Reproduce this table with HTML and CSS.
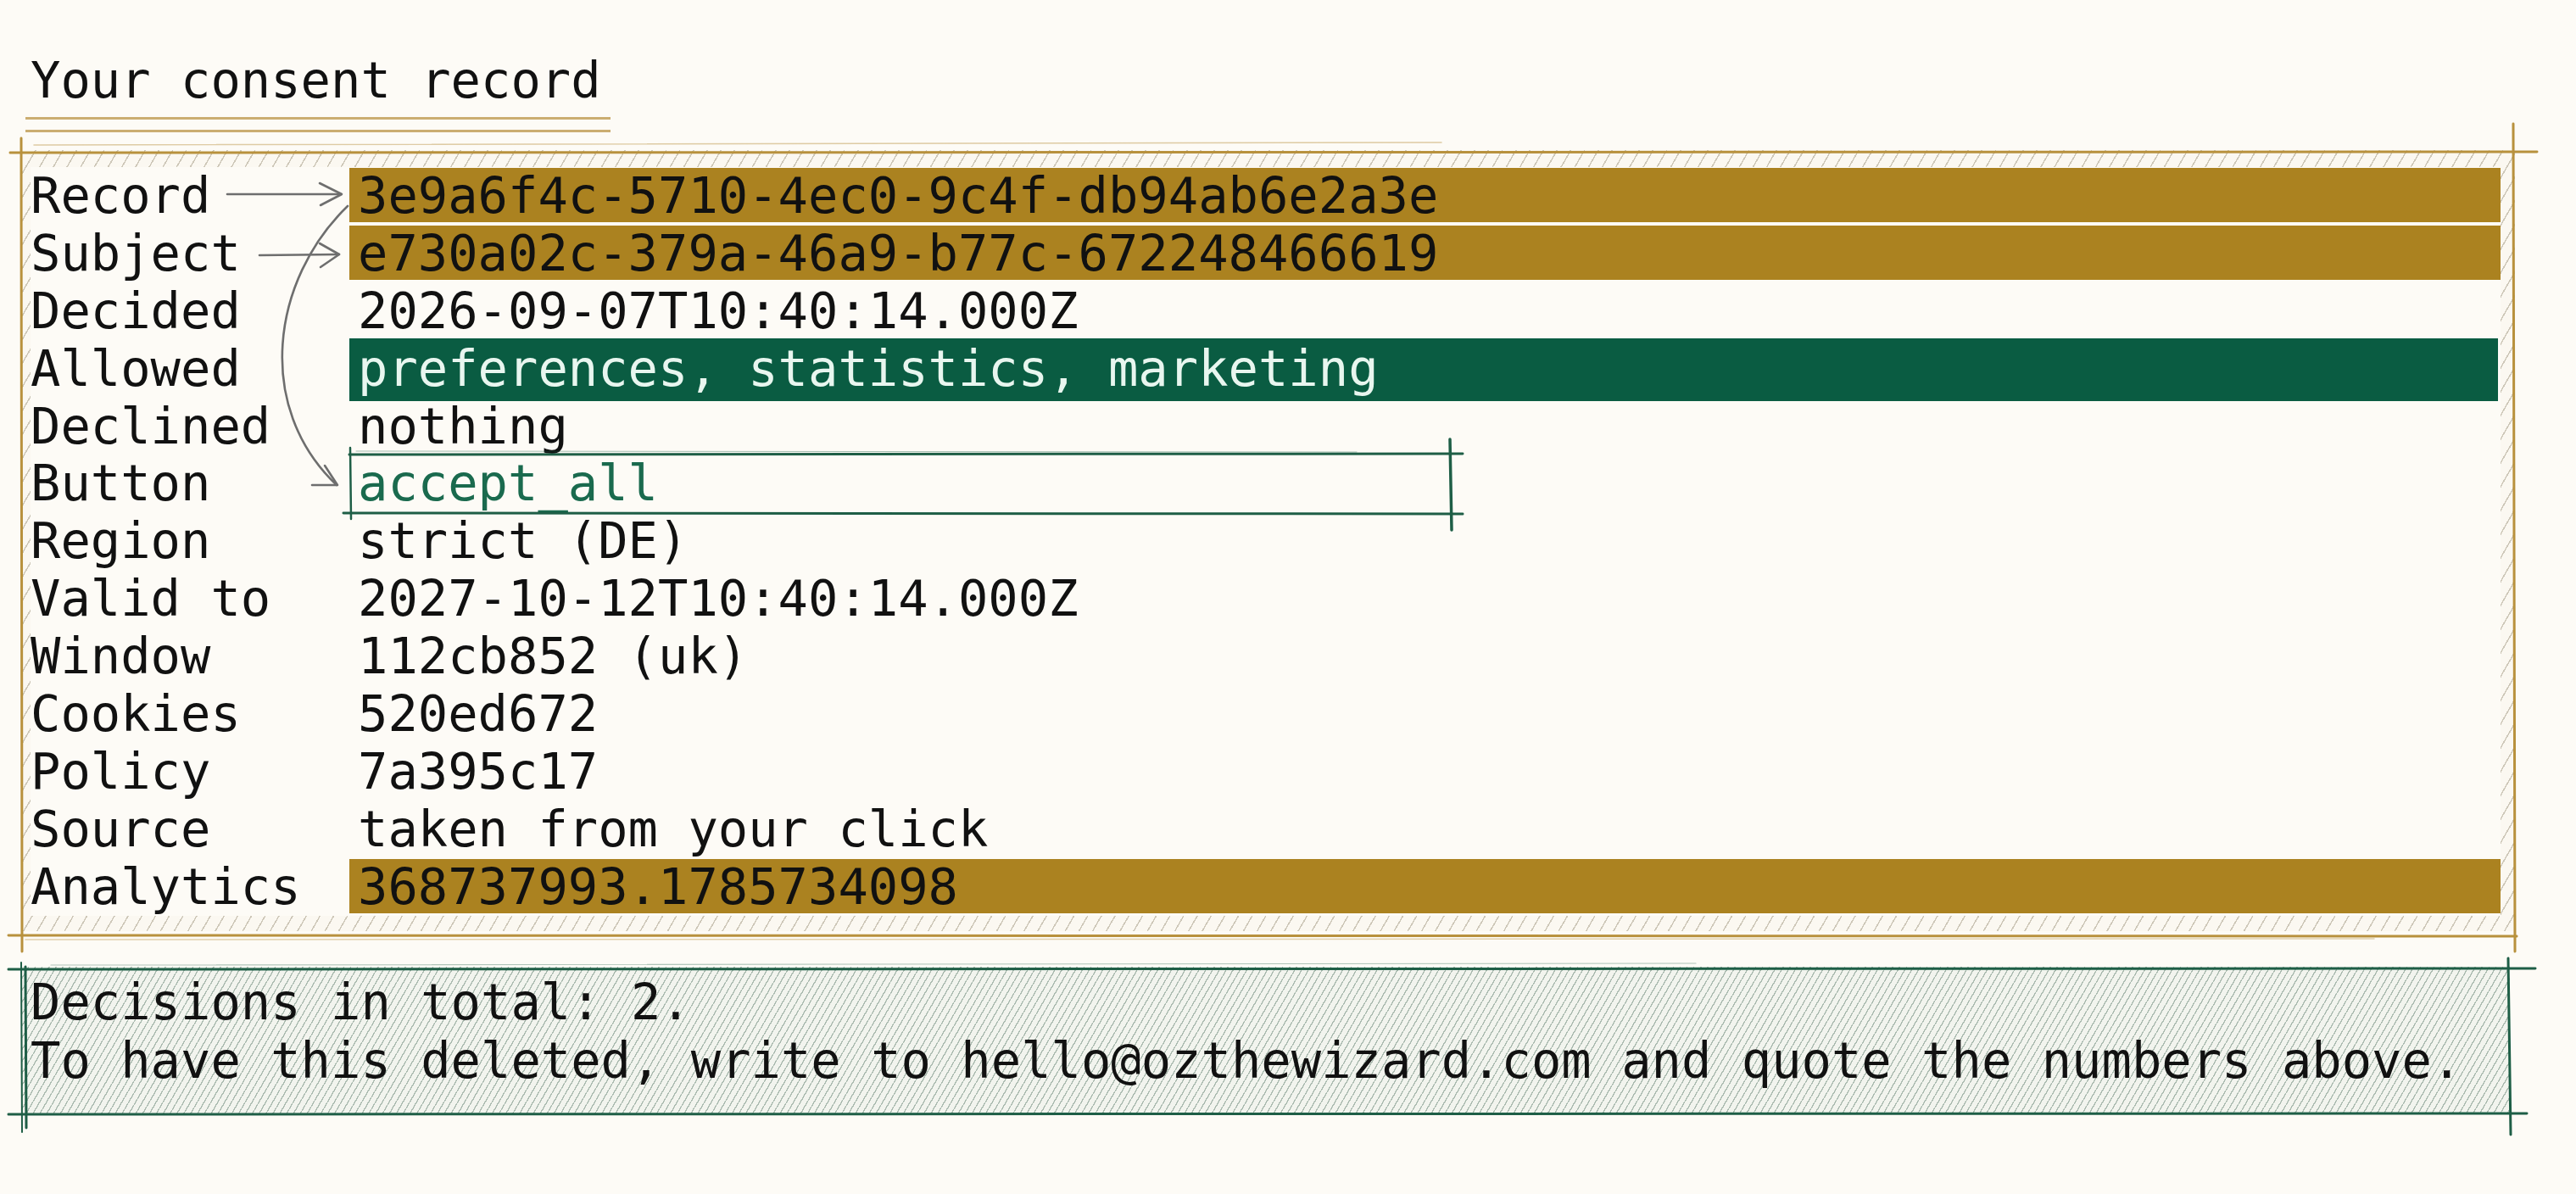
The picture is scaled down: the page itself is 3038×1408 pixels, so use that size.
FILE: index.html
```html
<!DOCTYPE html>
<html lang="en">
<head>
<meta charset="utf-8">
<title>Your consent record</title>
<link rel="stylesheet" href="styles.css">
</head>
<body>
<div class="page">
  <h1 class="title">Your consent record</h1>
  <div class="title-rule"></div>

  <section class="record">
    <div class="rows">
      <div class="row"><span class="k">Record</span><span class="v gold">3e9a6f4c-5710-4ec0-9c4f-db94ab6e2a3e</span></div>
      <div class="row"><span class="k">Subject</span><span class="v gold">e730a02c-379a-46a9-b77c-672248466619</span></div>
      <div class="row"><span class="k">Decided</span><span class="v">2026-09-07T10:40:14.000Z</span></div>
      <div class="row"><span class="k">Allowed</span><span class="v green">preferences, statistics, marketing</span></div>
      <div class="row"><span class="k">Declined</span><span class="v">nothing</span></div>
      <div class="row"><span class="k">Button</span><span class="v"><span class="btn">accept_all</span></span></div>
      <div class="row"><span class="k">Region</span><span class="v">strict (DE)</span></div>
      <div class="row"><span class="k">Valid to</span><span class="v">2027-10-12T10:40:14.000Z</span></div>
      <div class="row"><span class="k">Window</span><span class="v">112cb852 (uk)</span></div>
      <div class="row"><span class="k">Cookies</span><span class="v">520ed672</span></div>
      <div class="row"><span class="k">Policy</span><span class="v">7a395c17</span></div>
      <div class="row"><span class="k">Source</span><span class="v">taken from your click</span></div>
      <div class="row"><span class="k">Analytics</span><span class="v gold">368737993.1785734098</span></div>
    </div>
  </section>

  <section class="footer">
    <p class="line">Decisions in total: 2.</p>
    <p class="line">To have this deleted, write to hello@ozthewizard.com and quote the numbers above.</p>
  </section>

  <svg class="sketch" width="3038" height="1408" viewBox="0 0 3038 1408" aria-hidden="true">
    <g fill="none" stroke="#b8913d" stroke-linecap="round">
      <path d="M12 180 L2992 179" stroke-width="3"/>
      <path d="M40 171 L1700 168" stroke-width="1.5" opacity="0.45"/>
      <path d="M25 163 L26 1122" stroke-width="3"/>
      <path d="M2964 146 L2966 1122" stroke-width="3"/>
      <path d="M10 1103 L2968 1104" stroke-width="3"/>
      <path d="M30 1108 L2800 1107" stroke-width="1.5" opacity="0.4"/>
    </g>
    <g fill="none" stroke="#1e5e46" stroke-linecap="round">
      <path d="M10 1143 L2990 1142" stroke-width="3"/>
      <path d="M60 1138 L2000 1136" stroke-width="1.2" opacity="0.35"/>
      <path d="M10 1314 L2980 1313" stroke-width="3"/>
      <path d="M25 1135 L26 1335" stroke-width="2"/>
      <path d="M30 1140 L31 1330" stroke-width="3"/>
      <path d="M2958 1130 L2961 1338" stroke-width="3"/>
    </g>
    <g fill="none" stroke="#1e5e46" stroke-linecap="round">
      <path d="M412 536 L1725 535" stroke-width="3"/>
      <path d="M420 532 L1600 533" stroke-width="1" opacity="0.4"/>
      <path d="M405 605 L1725 606" stroke-width="3"/>
      <path d="M1710 518 L1712 625" stroke-width="3.5"/>
      <path d="M413 528 L414 612" stroke-width="2.5"/>
    </g>
    <g fill="none" stroke="#6e6e6e" stroke-width="2.6" stroke-linecap="round" stroke-linejoin="round">
      <path d="M268 229 L402 229"/>
      <path d="M377 216 L403 229 L378 242"/>
      <path d="M306 301 L400 300"/>
      <path d="M377 287 L400 300 L378 315"/>
      <path d="M410 243 C 320 330, 300 480, 397 572"/>
      <path d="M383 549 L398 572 L368 572"/>
    </g>
  </svg>
</div>
</body>
</html>
```

FILE: styles.css
```css
html, body {
  margin: 0;
  padding: 0;
  background: #fdfbf6;
}

body {
  font-family: "DejaVu Sans Mono", "Liberation Mono", monospace;
  font-size: 58.8px;
  line-height: normal;
  color: #111111;
}

.page {
  position: relative;
  width: 3038px;
  min-height: 1408px;
  padding-top: 61px;
  box-sizing: border-box;
}

.title {
  margin: 0 0 0 36px;
  font-size: inherit;
  font-weight: normal;
  line-height: 68px;
}

.title-rule {
  margin: 9px 0 0 30px;
  width: 690px;
  height: 12px;
  border-top: 3px solid #c3a05a;
  border-bottom: 3px solid #c3a05a;
  opacity: 0.85;
}

.record {
  margin: 21px 0 0 25px;
  width: 2941px;
  box-sizing: border-box;
  padding: 20px 17px 18px 11px;
  background-color: #fbf8f1;
  background-image: repeating-linear-gradient(120deg,
      rgba(150, 140, 115, 0.45) 0px,
      rgba(150, 140, 115, 0.45) 1.5px,
      transparent 1.5px,
      transparent 14px);
}

.rows {
  background: #fdfbf6;
}

.row {
  display: grid;
  grid-template-columns: 376px 1fr;
  height: 67.9px;
  line-height: 67.9px;
  white-space: pre;
}

.k {
  display: block;
}

.v {
  display: block;
  padding-left: 10px;
}

.v.gold {
  background: linear-gradient(to bottom,
      transparent 0px, transparent 1px,
      #ab8220 1px, #ab8220 calc(100% - 3px),
      transparent calc(100% - 3px));
}

.v.green {
  background: #0a5c42;
  color: #e8f6ef;
  margin-right: 3px;
  box-shadow: 0 -2px 0 #0a5c42, 0 4px 0 #0a5c42;
}

.btn {
  display: block;
  width: 1289px;
  color: #1a6a4e;
}

.footer {
  margin: 42px 0 0 25px;
  width: 2935px;
  box-sizing: border-box;
  padding: 7px 10px 29px 11px;
  background-color: #f2f4ee;
  background-image: repeating-linear-gradient(120deg,
      rgba(100, 130, 114, 0.5) 0px,
      rgba(100, 130, 114, 0.5) 1.3px,
      transparent 1.3px,
      transparent 7px);
}

.line {
  margin: 0;
  white-space: pre;
}

.sketch {
  position: absolute;
  left: 0;
  top: 0;
  pointer-events: none;
}
```
